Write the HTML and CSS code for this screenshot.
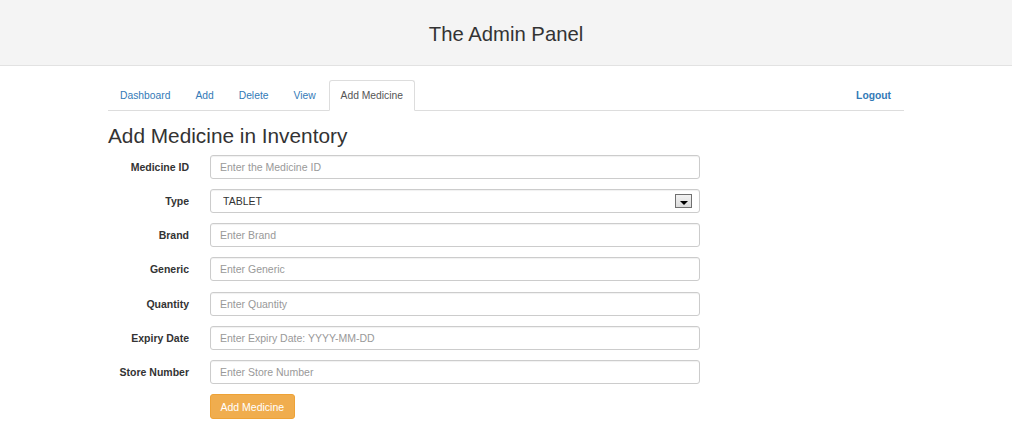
FILE: index.html
```html
<!DOCTYPE html>
<html>
<head>
<meta charset="utf-8">
<link rel="stylesheet" href="styles.css">
</head>
<body>
<header class="top">
  <h1 class="top-title">The Admin Panel</h1>
</header>
<div class="container">
  <nav class="tabs">
    <ul class="tab-list">
      <li><a class="tab">Dashboard</a></li>
      <li><a class="tab">Add</a></li>
      <li><a class="tab">Delete</a></li>
      <li><a class="tab">View</a></li>
      <li><a class="tab active">Add Medicine</a></li>
    </ul>
    <a class="tab logout">Logout</a>
  </nav>
  <h2 class="page-title">Add Medicine in Inventory</h2>
  <form class="form">
    <label class="lbl">Medicine ID</label>
    <input class="ctl" type="text" placeholder="Enter the Medicine ID">
    <label class="lbl">Type</label>
    <div class="select-wrap">
      <select class="ctl sel"><option>TABLET</option></select>
      <span class="arrow"><span class="tri"></span></span>
    </div>
    <label class="lbl">Brand</label>
    <input class="ctl" type="text" placeholder="Enter Brand">
    <label class="lbl">Generic</label>
    <input class="ctl" type="text" placeholder="Enter Generic">
    <label class="lbl">Quantity</label>
    <input class="ctl" type="text" placeholder="Enter Quantity">
    <label class="lbl">Expiry Date</label>
    <input class="ctl" type="text" placeholder="Enter Expiry Date: YYYY-MM-DD">
    <label class="lbl">Store Number</label>
    <input class="ctl" type="text" placeholder="Enter Store Number">
    <span></span>
    <div><button class="btn" type="button">Add Medicine</button></div>
  </form>
</div>
</body>
</html>
```

FILE: styles.css
```css
* { box-sizing: border-box; }
html, body { margin: 0; padding: 0; background: #fff; }
body {
  font-family: "Liberation Sans", Arial, sans-serif;
  font-size: 10.5px;
  color: #333;
}
.top {
  height: 66px;
  background: #f4f4f4;
  border-bottom: 1px solid #e2e2e2;
  display: flex;
  align-items: center;
  justify-content: center;
}
.top-title {
  margin: 0;
  font-weight: normal;
  font-size: 20.3px;
  color: #333;
  padding-top: 3px;
}
.container {
  width: 796px;
  margin-left: 108px;
}
.tabs {
  margin-top: 14px;
  display: flex;
  justify-content: space-between;
  border-bottom: 1px solid #ddd;
  height: 31px;
}
.tab-list {
  list-style: none;
  margin: 0;
  padding: 0;
  display: flex;
}
.tab-list li { margin-right: 1px; }
.tab {
  display: block;
  height: 31px;
  line-height: 30px;
  padding: 0 11px;
  font-size: 10.3px;
  color: #337ab7;
  text-decoration: none;
  border: 1px solid transparent;
  border-radius: 3px 3px 0 0;
}
.tab.active {
  color: #555;
  background: #fff;
  border-color: #ddd;
  border-bottom-color: #fff;
}
.logout {
  font-weight: bold;
  padding-right: 12px;
}
.page-title {
  margin: 13px 0 7px 0;
  font-weight: normal;
  font-size: 20.8px;
  line-height: 24px;
  color: #333;
}
.form {
  display: grid;
  grid-template-columns: 81px 490px;
  column-gap: 21px;
  row-gap: 10.17px;
  align-items: center;
}
.lbl {
  text-align: right;
  font-weight: bold;
  color: #333;
}
.ctl {
  display: block;
  width: 100%;
  height: 24px;
  margin: 0;
  padding: 0 9px;
  font-family: "Liberation Sans", Arial, sans-serif;
  font-size: 10.5px;
  color: #555;
  background: #fff;
  border: 1px solid #ccc;
  border-radius: 3px;
  box-shadow: inset 0 1px 1px rgba(0,0,0,0.06);
  outline: none;
}
.ctl::placeholder { color: #999; }
.select-wrap { position: relative; }
.sel {
  -webkit-appearance: none;
  appearance: none;
  padding-left: 12px;
  color: #333;
}
.arrow {
  position: absolute;
  right: 8px;
  top: 5px;
  width: 17px;
  height: 14px;
  border: 1px solid #707070;
  background: linear-gradient(#f2f2f2, #dcdcdc);
  display: flex;
  align-items: center;
  justify-content: center;
  pointer-events: none;
}
.tri {
  width: 0;
  height: 0;
  margin-top: 3px;
  border-left: 4px solid transparent;
  border-right: 4px solid transparent;
  border-top: 4px solid #000;
}
.btn {
  height: 25px;
  padding: 0 9.5px;
  font-family: "Liberation Sans", Arial, sans-serif;
  font-size: 10.5px;
  color: #fff;
  background: #f0ad4e;
  border: 1px solid #eea236;
  border-radius: 3px;
  cursor: pointer;
}
```
